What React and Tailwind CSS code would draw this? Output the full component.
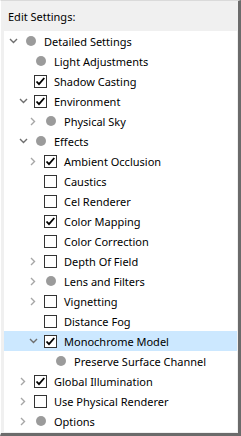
import React from 'react';

// flat tree: level, toggle (null | 'open' | 'closed'), kind ('dot' | 'on' | 'off')
const rows = [
  { level: 0, toggle: 'open', kind: 'dot', label: 'Detailed Settings' },
  { level: 1, toggle: null, kind: 'dot', label: 'Light Adjustments' },
  { level: 1, toggle: null, kind: 'on', label: 'Shadow Casting' },
  { level: 1, toggle: 'open', kind: 'on', label: 'Environment' },
  { level: 2, toggle: 'closed', kind: 'dot', label: 'Physical Sky' },
  { level: 1, toggle: 'open', kind: 'dot', label: 'Effects' },
  { level: 2, toggle: 'closed', kind: 'on', label: 'Ambient Occlusion' },
  { level: 2, toggle: null, kind: 'off', label: 'Caustics' },
  { level: 2, toggle: null, kind: 'off', label: 'Cel Renderer' },
  { level: 2, toggle: null, kind: 'on', label: 'Color Mapping' },
  { level: 2, toggle: null, kind: 'off', label: 'Color Correction' },
  { level: 2, toggle: 'closed', kind: 'off', label: 'Depth Of Field' },
  { level: 2, toggle: 'closed', kind: 'dot', label: 'Lens and Filters' },
  { level: 2, toggle: 'closed', kind: 'off', label: 'Vignetting' },
  { level: 2, toggle: null, kind: 'off', label: 'Distance Fog' },
  { level: 2, toggle: 'open', kind: 'on', label: 'Monochrome Model', selected: true },
  { level: 3, toggle: null, kind: 'dot', label: 'Preserve Surface Channel' },
  { level: 1, toggle: 'closed', kind: 'on', label: 'Global Illumination' },
  { level: 1, toggle: 'closed', kind: 'off', label: 'Use Physical Renderer' },
  { level: 1, toggle: 'closed', kind: 'dot', label: 'Options' }
];

const indent = ['pl-0', 'pl-[10px]', 'pl-[20px]', 'pl-[30px]'];

function Toggle({ state }) {
  if (!state) return <span className="w-[18px] shrink-0" />;
  return (
    <span className="flex w-[18px] shrink-0 items-center justify-center">
      {state === 'open' ? (
        <svg width="9" height="6" viewBox="0 0 9 6">
          <path d="M1 1 L4.5 4.5 L8 1" fill="none" stroke="#6e6e6e" strokeWidth="1.4" />
        </svg>
      ) : (
        <svg width="6" height="9" viewBox="0 0 6 9">
          <path d="M1 1 L4.5 4.5 L1 8" fill="none" stroke="#a6a6a6" strokeWidth="1.4" />
        </svg>
      )}
    </span>
  );
}

function Marker({ kind }) {
  if (kind === 'dot') {
    return (
      <span className="flex h-[13px] w-[13px] shrink-0 items-center justify-center">
        <span className="h-[10px] w-[10px] rounded-full bg-[#9b9b9b]" />
      </span>
    );
  }
  return (
    <svg width="13" height="13" viewBox="0 0 13 13" className="shrink-0">
      <rect x="0.5" y="0.5" width="12" height="12" fill="#fff" stroke="#333" />
      {kind === 'on' && (
        <path d="M2.5 6.5 L5 9.2 L10.3 3" fill="none" stroke="#000" strokeWidth="1.8" />
      )}
    </svg>
  );
}

export default function App() {
  return (
    <div
      className="flex h-[436px] w-[241px] flex-col border-t border-l border-t-[#dadada] border-l-white border-r-[3px] border-b-[3px] border-r-[#6b6b6b] border-b-[#6b6b6b] bg-[#f0f0f0] text-[11px] text-black"
      style={{ fontFamily: '"Noto Sans", "Open Sans", sans-serif' }}
    >
      <div className="flex h-[30px] items-center pl-[7px] pt-[2px]">Edit Settings:</div>
      <div className="mb-px ml-[3px] mr-px flex-1 bg-white">
        {rows.map((row) => (
          <div
            key={row.label}
            className={`flex h-[20px] items-center ${indent[row.level]} ${row.selected ? 'bg-[#cce8ff]' : ''}`}
          >
            <Toggle state={row.toggle} />
            <span className="ml-[2px]">
              <Marker kind={row.kind} />
            </span>
            <span className="ml-[7px] whitespace-nowrap leading-none">{row.label}</span>
          </div>
        ))}
      </div>
    </div>
  );
}
